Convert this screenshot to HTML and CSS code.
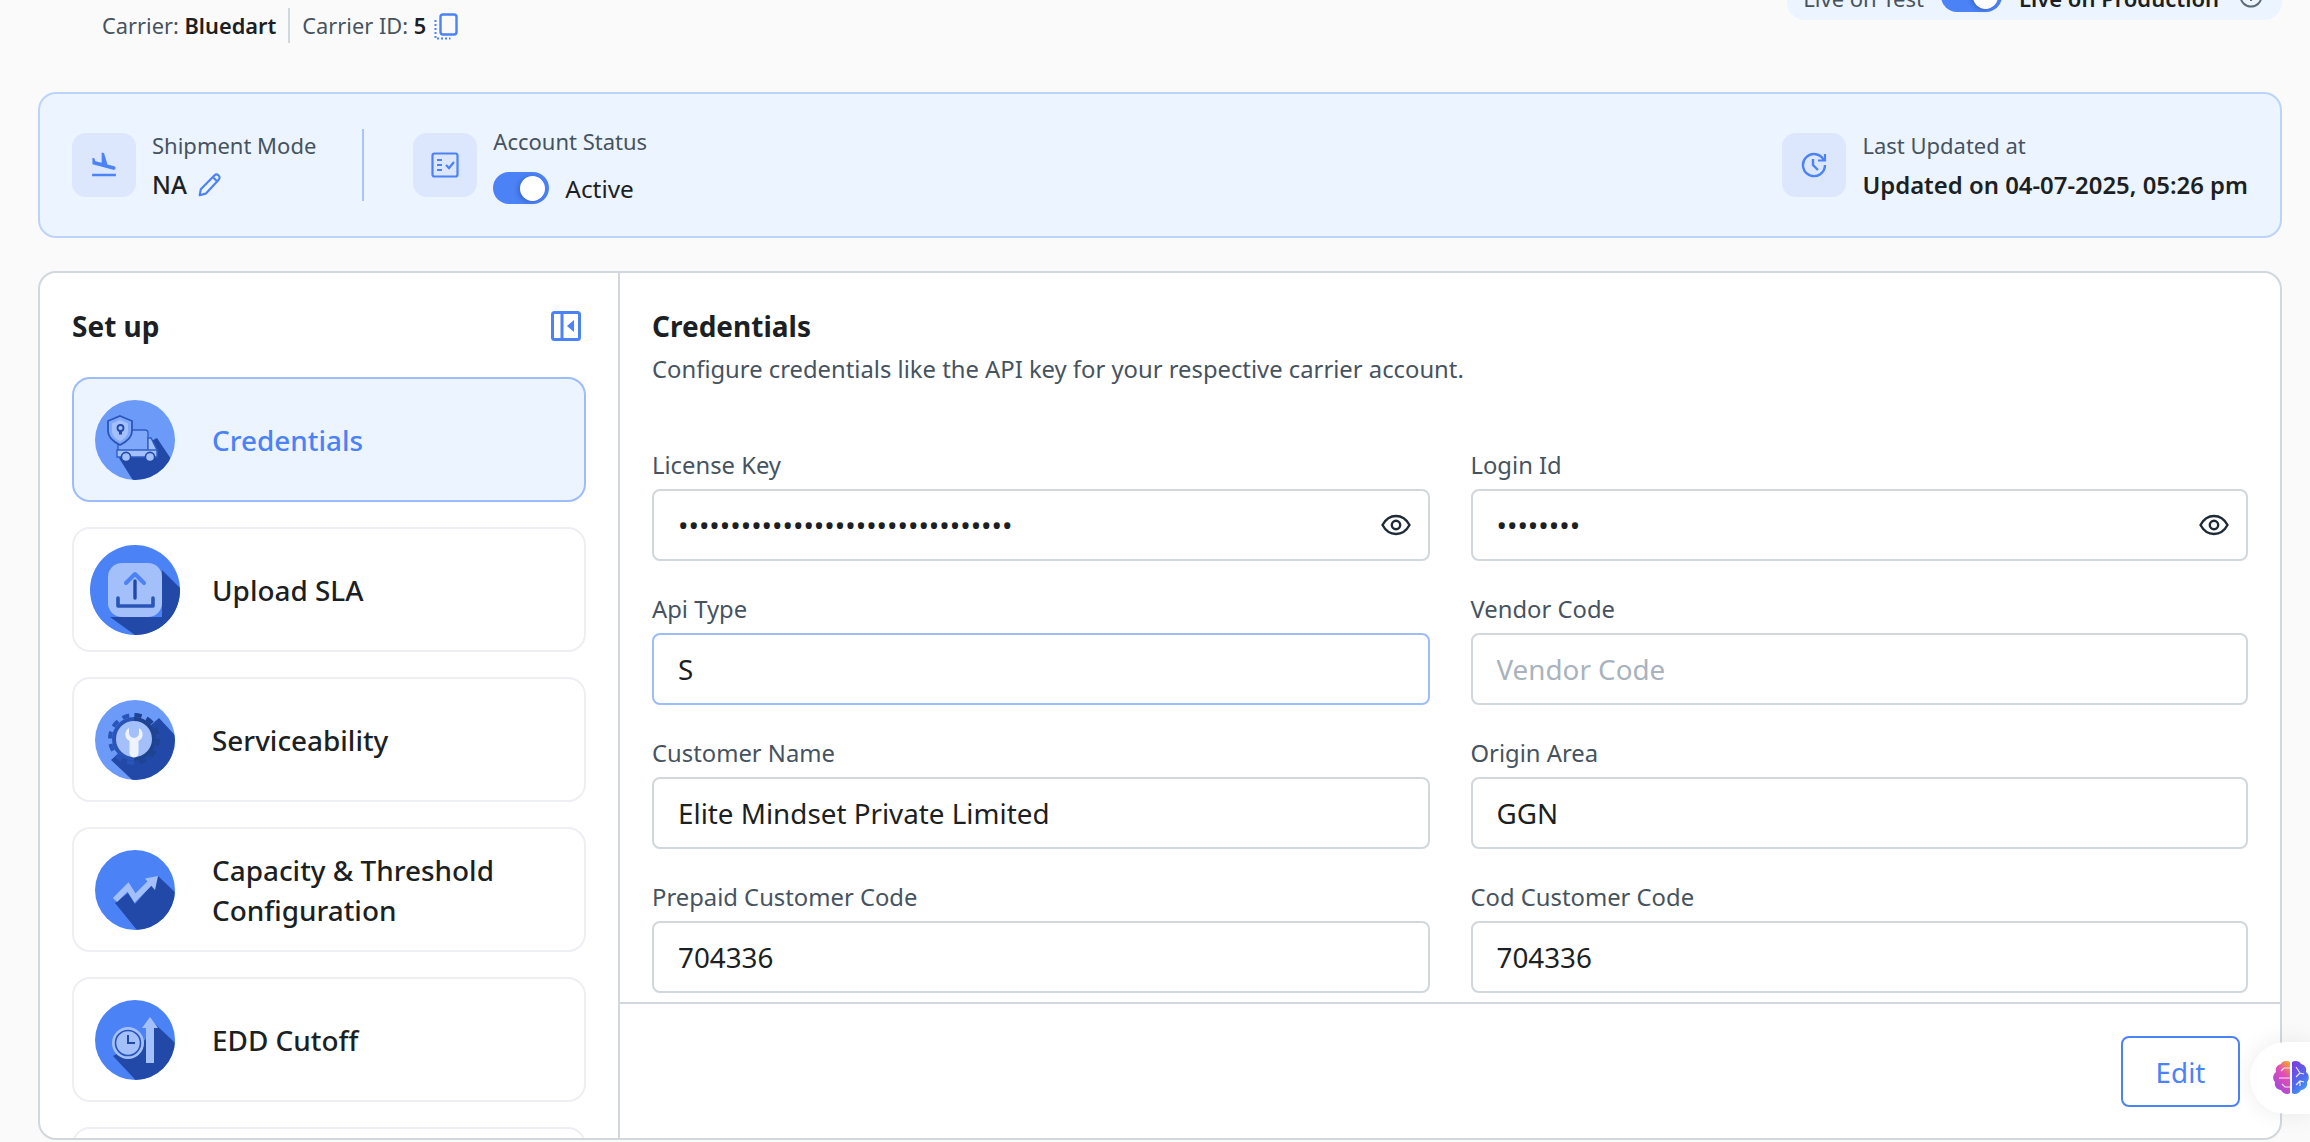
FILE: index.html
```html
<!DOCTYPE html>
<html lang="en">
  <head>
    <meta charset="UTF-8">
    <title>Carrier Setup</title>
    <link rel="stylesheet" href="styles.css">
  </head>
  <body>
    <div class="page">
      <div class="top-bar">
        <div class="carrier-info">
          <span>Carrier: <b>Bluedart</b></span>
          <span class="carrier-sep"></span>
          <span>Carrier ID: <b>5</b></span>
          <svg class="copy-icon" width="24" height="28" viewBox="0 0 24 28" fill="none" stroke="#4b82f6">
            <rect x="6.5" y="1.5" width="16" height="20" rx="2.5" stroke-width="2.4"/>
            <path d="M1.5 7v18.5h15" stroke-width="2" stroke-dasharray="2 2"/>
          </svg>
        </div>
        <div class="env-pill">
          <span class="env-test">Live on Test</span>
          <span class="toggle toggle-wide"><span class="knob"></span></span>
          <span class="env-prod">Live on Production</span>
          <svg width="24" height="24" viewBox="0 0 24 24" fill="none" stroke="#5b6b78" stroke-width="2">
            <circle cx="12" cy="12" r="10.5"/>
            <path d="M12 11v6M12 7v1.5"/>
          </svg>
        </div>
      </div>

      <div class="banner">
        <div class="banner-group">
          <div class="banner-icon">
            <svg width="30" height="30" viewBox="0 0 24 24" fill="#4b82f6"><path d="M2.5 19h19v2h-19zm7.18-5.73l4.35 1.16 5.31 1.42c.8.21 1.62-.26 1.84-1.06.21-.8-.26-1.62-1.06-1.84l-5.31-1.42-2.76-9.02L10.12 2v8.28L5.15 8.95l-.93-2.32-1.45-.39v5.17l1.6.43 5.31 1.43z"/></svg>
          </div>
          <div class="banner-text">
            <div class="banner-label">Shipment Mode</div>
            <div class="banner-value">
              <span>NA</span>
              <svg width="26" height="26" viewBox="0 0 24 24" fill="none" stroke="#4b82f6" stroke-width="2" stroke-linejoin="round"><path d="M2.5 21.5l1-5.5L16 3.2a2.7 2.7 0 0 1 4 3.9L8 20z"/><path d="M15 5l4 4" /></svg>
            </div>
          </div>
        </div>
        <div class="banner-divider"></div>
        <div class="banner-group">
          <div class="banner-icon">
            <svg width="28" height="26" viewBox="0 0 28 26" fill="none" stroke="#4b82f6" stroke-width="2.2">
              <rect x="1.5" y="1.5" width="25" height="23" rx="2"/>
              <path d="M6 8h5M6 13h5M6 18h5M15 13l3 3 5-6"/>
            </svg>
          </div>
          <div class="banner-text">
            <div class="banner-label">Account Status</div>
            <div class="banner-status">
              <span class="toggle"><span class="knob"></span></span>
              <span>Active</span>
            </div>
          </div>
        </div>
        <div class="banner-group banner-right">
          <div class="banner-icon">
            <svg width="28" height="26" viewBox="0 0 28 26" fill="none" stroke="#4b82f6" stroke-width="2.4">
              <path d="M24 8.5A11 11 0 1 0 25 13"/>
              <path d="M18 8.5h7V2" stroke-width="2.2"/>
              <path d="M13 7v6l5 5"/>
            </svg>
          </div>
          <div class="banner-text">
            <div class="banner-label">Last Updated at</div>
            <div class="banner-value banner-strong">Updated on 04-07-2025, 05:26 pm</div>
          </div>
        </div>
      </div>

      <div class="setup-card">
        <aside class="sidebar">
          <div class="sidebar-head">
            <h2>Set up</h2>
            <svg width="30" height="30" viewBox="0 0 30 30" fill="none" stroke="#4b82f6" stroke-width="3">
              <rect x="1.5" y="1.5" width="27" height="27" rx="2"/>
              <path d="M11 2v26"/>
              <path d="M23 9v12l-7-6z" fill="#4b82f6" stroke="none"/>
            </svg>
          </div>

          <svg class="clip-defs" width="0" height="0">
            <defs>
              <clipPath id="disc"><circle cx="40" cy="40" r="40"/></clipPath>
              <clipPath id="gearRight"><rect x="39" y="0" width="41" height="80"/></clipPath>
            </defs>
          </svg>

          <div class="nav-item active">
            <div class="nav-icon">
              <svg width="80" height="80" viewBox="0 0 80 80">
                <circle cx="40" cy="40" r="40" fill="#6b9af8"/>
                <path d="M24 58L62 38L90 80V90H44z" fill="#2249a8" clip-path="url(#disc)"/>
                <path d="M23 30h27a3 3 0 0 1 3 3v21H23z" fill="#7fa8fa" stroke="#2f5ec4" stroke-width="1.4"/>
                <path d="M53 38h3l6 12v6H53z" fill="#a3c0fb" stroke="#2f5ec4" stroke-width="1.4"/>
                <path d="M22 50h40v7H22z" fill="#a3c0fb" stroke="#2f5ec4" stroke-width="1.4"/>
                <circle cx="31" cy="57" r="4.6" fill="#a3c0fb" stroke="#2249a8" stroke-width="1.6"/>
                <circle cx="55" cy="57" r="4.6" fill="#a3c0fb" stroke="#2249a8" stroke-width="1.6"/>
                <path d="M25 16l12 5v10c0 7-6 11-12 14-6-3-12-7-12-14V21z" fill="#7fa8fa" stroke="#2a55b8" stroke-width="1.8"/>
                <path d="M25 20l8 3.4v7.6c0 5-3.6 8-8 10-4.400-2-8-5-8-10v-7.600z" fill="#a3c0fb"/>
                <circle cx="25.500" cy="28" r="3" fill="#a3c0fb" stroke="#2249a8" stroke-width="1.800"/>
                <path d="M25.500 30.500v4" stroke="#2249a8" stroke-width="3"/>
              </svg>
            </div>
            <span>Credentials</span>
          </div>

          <div class="nav-item">
            <div class="nav-icon">
              <svg width="90" height="90" viewBox="0 0 90 90">
                <circle cx="45" cy="45" r="45" fill="#4b82f6"/>
                <path d="M72 25L90 43C91 70 70 90 45 90L20 72H72z" fill="#2249a8"/>
                <rect x="18" y="18" width="54" height="54" rx="14" fill="#a3c0fb"/>
                <path d="M45 36v17" stroke="#2249a8" stroke-width="3.4" stroke-linecap="round"/>
                <path d="M36 38l9-9 9 9" fill="none" stroke="#4b82f6" stroke-width="4" stroke-linecap="round" stroke-linejoin="round"/>
                <path d="M28 53v8h35v-8" fill="none" stroke="#2a55b8" stroke-width="3.6" stroke-linecap="round" stroke-linejoin="round"/>
              </svg>
            </div>
            <span>Upload SLA</span>
          </div>

          <div class="nav-item">
            <div class="nav-icon">
              <svg width="80" height="80" viewBox="0 0 80 80">
                <circle cx="40" cy="40" r="40" fill="#6b9af8"/>
                <path d="M64 18L90 46V90H48L16 60z" fill="#2249a8" clip-path="url(#disc)"/>
                <circle cx="39" cy="39" r="22" fill="#2a55b8"/>
                <circle cx="39" cy="39" r="24" fill="none" stroke="#2a55b8" stroke-width="4" stroke-dasharray="7 5.560"/>
                <g clip-path="url(#gearRight)">
                  <circle cx="39" cy="39" r="22" fill="#1f4393"/>
                  <circle cx="39" cy="39" r="24" fill="none" stroke="#1f4393" stroke-width="4" stroke-dasharray="7 5.560"/>
                </g>
                <circle cx="39" cy="39" r="18" fill="#a3c0fb"/>
                <path d="M34 28C29 31 29 38 34.500 41V53a4.500 4.500 0 0 0 9 0V41C49 38 49 31 44 28V33a5 5 0 0 1-10 0z" fill="#eef3fe"/>
              </svg>
            </div>
            <span>Serviceability</span>
          </div>

          <div class="nav-item">
            <div class="nav-icon">
              <svg width="80" height="80" viewBox="0 0 80 80">
                <circle cx="40" cy="40" r="40" fill="#4b82f6"/>
                <path d="M63 26L90 52V90H50L20 53L33 43L40 54L54 38z" fill="#2249a8" clip-path="url(#disc)"/>
                <path d="M20 50L33 37L40 48L55 33" fill="none" stroke="#a3c0fb" stroke-width="6"/>
                <path d="M63 26L50 28.500L60 40z" fill="#a3c0fb"/>
              </svg>
            </div>
            <span>Capacity &amp; Threshold<br>Configuration</span>
          </div>

          <div class="nav-item">
            <div class="nav-icon">
              <svg width="80" height="80" viewBox="0 0 80 80">
                <circle cx="40" cy="40" r="40" fill="#4b82f6"/>
                <path d="M60 24L90 52V90H50L18 56L50 40z" fill="#2249a8" clip-path="url(#disc)"/>
                <circle cx="33" cy="43" r="16" fill="#a3c0fb"/>
                <circle cx="33" cy="43" r="12.500" fill="none" stroke="#2a55b8" stroke-width="1.600"/>
                <path d="M33 35v8h7" fill="none" stroke="#2249a8" stroke-width="2"/>
                <path d="M55 17l8 11h-4v35h-8V28h-4z" fill="#a3c0fb"/>
              </svg>
            </div>
            <span>EDD Cutoff</span>
          </div>

          <div class="nav-item"></div>
        </aside>

        <main class="content">
          <div class="content-scroll">
            <h2>Credentials</h2>
            <p class="content-sub">Configure credentials like the API key for your respective carrier account.</p>

            <div class="form-grid">
              <div class="field">
                <label>License Key</label>
                <div class="input-wrap">
                  <input type="password" value="12345678901234567890123456789012">
                  <svg class="eye" width="30" height="22" viewBox="0 0 30 22" fill="none" stroke="#1f2a37" stroke-width="2.400"><path d="M1.500 11C5 4.500 10 2 15 2s10 2.500 13.500 9C25 17.500 20 20 15 20S5 17.500 1.500 11z"/><circle cx="15" cy="11" r="4.200"/></svg>
                </div>
              </div>
              <div class="field">
                <label>Login Id</label>
                <div class="input-wrap">
                  <input type="password" value="12345678">
                  <svg class="eye" width="30" height="22" viewBox="0 0 30 22" fill="none" stroke="#1f2a37" stroke-width="2.400"><path d="M1.500 11C5 4.500 10 2 15 2s10 2.500 13.500 9C25 17.500 20 20 15 20S5 17.500 1.500 11z"/><circle cx="15" cy="11" r="4.200"/></svg>
                </div>
              </div>
              <div class="field">
                <label>Api Type</label>
                <input class="focused" type="text" value="S">
              </div>
              <div class="field">
                <label>Vendor Code</label>
                <input type="text" placeholder="Vendor Code">
              </div>
              <div class="field">
                <label>Customer Name</label>
                <input type="text" value="Elite Mindset Private Limited">
              </div>
              <div class="field">
                <label>Origin Area</label>
                <input type="text" value="GGN">
              </div>
              <div class="field">
                <label>Prepaid Customer Code</label>
                <input type="text" value="704336">
              </div>
              <div class="field">
                <label>Cod Customer Code</label>
                <input type="text" value="704336">
              </div>
            </div>
          </div>
          <div class="content-footer">
            <button class="edit-button">Edit</button>
          </div>
        </main>
      </div>
    </div>

    <div class="brain-tab">
      <svg width="38" height="36" viewBox="0 0 38 36">
        <defs>
          <linearGradient id="brainLeft" x1="0.800" y1="0" x2="0.200" y2="1">
            <stop offset="0" stop-color="#f59e2e"/>
            <stop offset="0.350" stop-color="#e24fb4"/>
            <stop offset="1" stop-color="#9a45e0"/>
          </linearGradient>
          <linearGradient id="brainRight" x1="0.200" y1="0" x2="0.700" y2="1">
            <stop offset="0" stop-color="#7a3fe0"/>
            <stop offset="0.600" stop-color="#4f6cf0"/>
            <stop offset="1" stop-color="#3ba5f5"/>
          </linearGradient>
        </defs>
        <path d="M18 2C15 0 10 1 9 4 5 5 3 8 4 12 1 14 0 19 3 22 2 26 5 30 9 30 11 34 16 35 18 33z" fill="url(#brainLeft)"/>
        <path d="M20 2C23 0 28 1 29 4 33 5 35 8 34 12 37 14 38 19 35 22 36 26 33 30 29 30 27 34 22 35 20 33z" fill="url(#brainRight)"/>
        <path d="M18 8h-6l-3 3M18 18H7M18 27h-5l-3-3M24 7l4 6 4 1M28 13l-4 4M24 25l4-4 4 1M28 21v5" fill="none" stroke="#fff" stroke-width="1.200" opacity="0.850"/>
      </svg>
    </div>
  </body>
</html>
```

FILE: styles.css
```css
* {
  box-sizing: border-box;
}

html,
body {
  margin: 0;
  height: 1142px;
  overflow: hidden;
}

body {
  font-family: "Noto Sans", "Open Sans", sans-serif;
  background: #fafafa;
  color: #1c1f23;
}

.page {
  padding: 0 28px 0 38px;
}

.top-bar {
  height: 92px;
  display: flex;
  justify-content: space-between;
  align-items: flex-start;
}

.carrier-info {
  display: flex;
  align-items: center;
  gap: 12px;
  height: 35px;
  margin-top: 8px;
  margin-left: 64px;
  font-size: 21.8px;
  color: #46535f;
}

.carrier-info b {
  font-weight: 600;
  color: #1c1f23;
}

.carrier-sep {
  width: 2px;
  height: 35px;
  background: #d1d7dc;
}

.copy-icon {
  margin-left: -4px;
  margin-top: 2px;
}

.env-pill {
  display: flex;
  align-items: center;
  height: 48px;
  margin-top: -28px;
  padding: 0 19px 0 16px;
  gap: 17px;
  background: #ecf4ff;
  border-radius: 18px;
  font-size: 22px;
}

.env-test {
  padding-top: 3px;
  color: #46535f;
}

.env-prod {
  padding-top: 3px;
  font-weight: 600;
  margin-right: 3px;
}

.toggle {
  display: inline-flex;
  align-items: center;
  justify-content: flex-end;
  width: 56px;
  height: 32px;
  padding-right: 4px;
  background: #4b82f6;
  border-radius: 16px;
}

.toggle-wide {
  width: 61px;
}

.knob {
  width: 25px;
  height: 25px;
  background: #fff;
  border-radius: 50%;
  box-shadow: -2px 1px 4px rgba(20, 40, 90, 0.3);
}

.banner {
  display: flex;
  align-items: center;
  height: 146px;
  padding: 0 32px;
  background: #ecf4ff;
  border: 2px solid #bcd4fb;
  border-radius: 18px;
}

.banner-group {
  display: flex;
  align-items: center;
  gap: 16px;
}

.banner-right {
  margin-left: auto;
}

.banner-icon {
  display: flex;
  align-items: center;
  justify-content: center;
  width: 64px;
  height: 64px;
  background: #dce7fd;
  border-radius: 14px;
}

.banner-label {
  font-size: 22px;
  line-height: 30px;
  color: #46535f;
}

.banner-value {
  display: flex;
  align-items: center;
  gap: 10px;
  margin-top: 10px;
  font-size: 24.4px;
  line-height: 30px;
  font-weight: 500;
}

.banner-strong {
  font-size: 23.9px;
  font-weight: 600;
}

.banner-status {
  display: flex;
  align-items: center;
  gap: 16px;
  margin-top: 16px;
  font-size: 24.4px;
}

.banner-divider {
  width: 2px;
  height: 72px;
  margin: 0 49px 0 46px;
  background: #a9c6f9;
}

.setup-card {
  display: grid;
  grid-template-columns: 580px 1fr;
  height: 869px;
  margin-top: 33px;
  background: #fff;
  border: 2px solid #d1d7dc;
  border-radius: 18px;
  overflow: hidden;
}

.sidebar {
  padding: 33px 32px 0 32px;
  border-right: 2px solid #d1d7dc;
  overflow: hidden;
}

.sidebar-head {
  display: flex;
  justify-content: space-between;
  align-items: center;
  height: 40px;
  padding-right: 5px;
  margin-bottom: 31px;
}

.sidebar-head h2,
.content h2 {
  margin: 0;
  font-size: 28px;
  line-height: 40px;
  font-weight: 700;
}

.clip-defs {
  position: absolute;
}

.nav-item {
  display: flex;
  align-items: center;
  gap: 32px;
  height: 125px;
  margin-bottom: 25px;
  padding-left: 16px;
  background: #fff;
  border: 2px solid #edeff3;
  border-radius: 18px;
  font-size: 27.9px;
  line-height: 40px;
  font-weight: 500;
}

.nav-item.active {
  background: #ecf4ff;
  border-color: #9cbdf9;
  color: #4b82f6;
}

.nav-icon {
  display: flex;
  align-items: center;
  justify-content: center;
  width: 90px;
  flex-shrink: 0;
}

.content {
  display: flex;
  flex-direction: column;
  min-width: 0;
}

.content-scroll {
  flex: 1;
  min-height: 0;
  padding: 33px 32px 0 32px;
  overflow: hidden;
}

.content-sub {
  margin: 7px 0 0;
  font-size: 23.8px;
  line-height: 32px;
  color: #46535f;
}

.form-grid {
  display: grid;
  grid-template-columns: 1fr 1fr;
  column-gap: 41px;
  row-gap: 32px;
  margin-top: 64px;
}

.field label {
  display: block;
  margin-bottom: 8px;
  font-size: 23.8px;
  line-height: 32px;
  color: #46535f;
}

.field input {
  display: block;
  width: 100%;
  height: 72px;
  padding: 0 24px;
  font-family: inherit;
  font-size: 27.8px;
  color: #1c1f23;
  background: #fff;
  border: 2px solid #d1d7dc;
  border-radius: 8px;
  outline: none;
}

.field input.focused {
  border-color: #9cbdf9;
}

.field input::placeholder {
  color: #a9b3bd;
}

.input-wrap {
  position: relative;
}

.eye {
  position: absolute;
  top: 25px;
  right: 19px;
}

.content-footer {
  display: flex;
  justify-content: flex-end;
  height: 136px;
  padding: 32px 40px 0 0;
  border-top: 2px solid #d1d7dc;
}

.edit-button {
  width: 119px;
  height: 71px;
  font-family: inherit;
  font-size: 27.8px;
  color: #4b82f6;
  background: #fff;
  border: 2px solid #4b82f6;
  border-radius: 8px;
}

.brain-tab {
  position: fixed;
  top: 1042px;
  right: 0;
  display: flex;
  align-items: center;
  width: 60px;
  height: 72px;
  padding-left: 22px;
  background: #fff;
  border-radius: 36px 0 0 36px;
  box-shadow: 0 0 24px rgba(0, 0, 0, 0.08);
}
```
